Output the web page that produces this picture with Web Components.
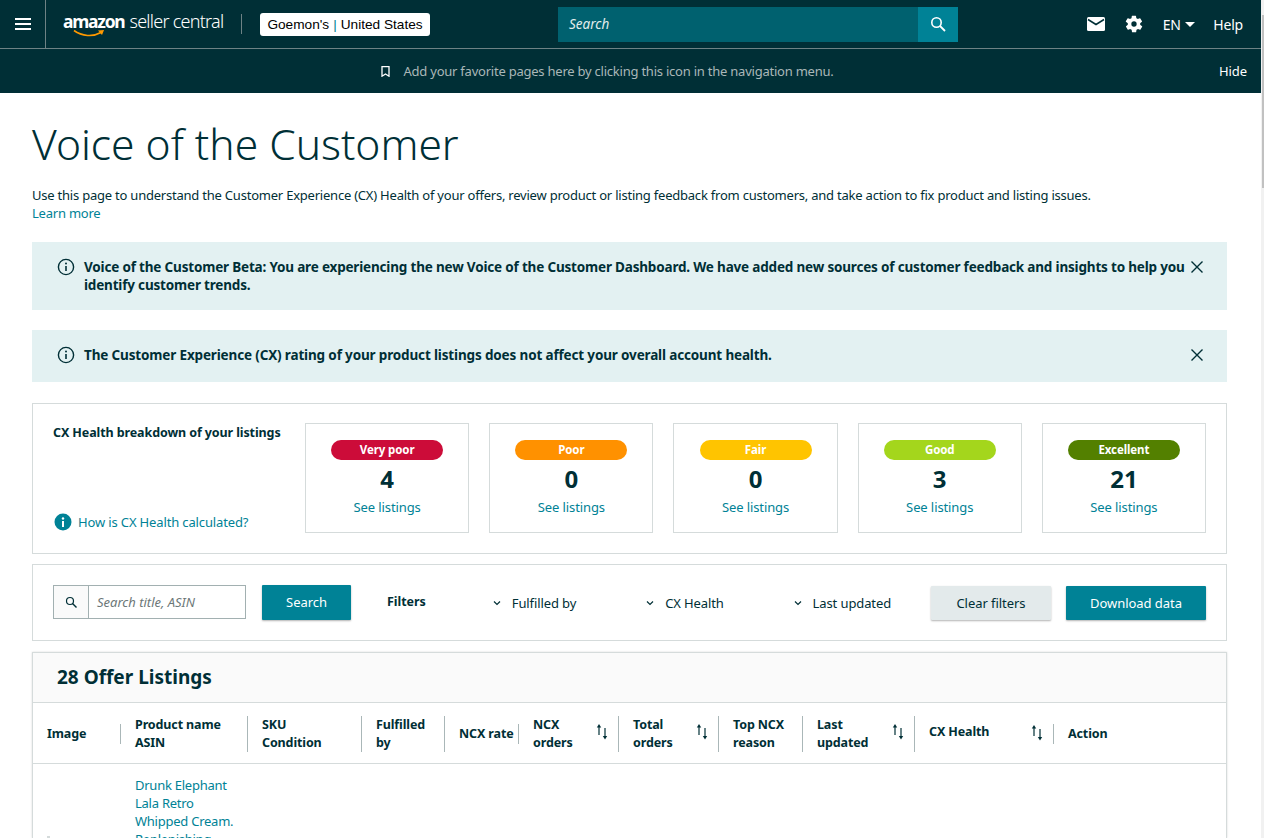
<!DOCTYPE html>
<html><head><meta charset="utf-8"><style>
html,body{margin:0;height:838px;overflow:hidden;background:#fff}
body{font-family:"Noto Sans","Open Sans",sans-serif;color:#002f36;font-size:14px;position:relative}
</style></head><body>
<sc-app></sc-app>
<script>
const FONT='"Noto Sans","Open Sans",sans-serif';
function def(name,html){customElements.define(name,class extends HTMLElement{connectedCallback(){if(this.shadowRoot)return;const r=this.attachShadow({mode:'open'});r.innerHTML=typeof html==='function'?html(this):html;}});}

def('sc-topbar',`<style>
:host{display:flex;align-items:center;height:48px;background:#002f36;border-bottom:1px solid #6e8285;color:#fff;box-sizing:content-box}
.burger{width:45px;height:48px;border-right:1px solid #6e8285;display:flex;align-items:center;justify-content:center;flex:none}
.logo{margin-left:18px;width:159px;position:relative;height:48px;flex:none}
.lt{display:flex;align-items:baseline;margin-top:9px;line-height:24px;white-space:nowrap}
.am{font:700 17.500px "Noto Sans",sans-serif;letter-spacing:-1.250px;margin-left:-1px}
.sc{font:300 18px "Noto Sans",sans-serif;letter-spacing:-.75px;margin-left:5px}
.smile{position:absolute;left:9px;top:29px}
.div{width:1px;height:20px;background:#6e8285;margin:0 18px;flex:none}
.acct{background:#fff;border-radius:3px;color:#000;height:23px;width:170px;box-sizing:border-box;padding:0 7px;display:flex;align-items:center;justify-content:center;font:13.650px "Liberation Sans",sans-serif;white-space:nowrap;flex:none}
.acct i{font-style:normal;color:#008296;margin:0 4px}
.search{margin-left:128px;width:400px;height:35px;background:#00616f;display:flex;flex:none}
.search span{flex:1;font:italic 13.500px ${FONT};padding-left:11px;line-height:35px;color:#e3eded}
.search b{width:40px;background:#008296;display:flex;align-items:center;justify-content:center}
.right{margin-left:auto;display:flex;align-items:center;padding-right:18px;font:14px ${FONT}}
.en{display:flex;align-items:center;margin-left:19px;letter-spacing:-.5px}
.help{margin-left:18px;letter-spacing:-.2px}
</style>
<div class="burger"><svg width="16" height="12" viewBox="0 0 16 12"><path d="M0 1h16M0 6h16M0 11h16" stroke="#fff" stroke-width="2"/></svg></div>
<div class="logo"><div class="lt"><span class="am">amazon</span><span class="sc">seller central</span></div>
<svg class="smile" width="34" height="10" viewBox="0 0 34 10"><path d="M1 1.500C9 7.500 20 8 28 3.500" fill="none" stroke="#f90" stroke-width="1.600"/><path d="M25 1.500l6-.5-2 5z" fill="#f90"/></svg></div>
<div class="div"></div>
<div class="acct">Goemon's<i>|</i>United States</div>
<div class="search"><span>Search</span><b><svg width="16" height="16" viewBox="0 0 16 16"><circle cx="6.500" cy="6.500" r="4.700" fill="none" stroke="#fff" stroke-width="1.600"/><path d="M10 10l5 5" stroke="#fff" stroke-width="1.800"/></svg></b></div>
<div class="right">
<svg width="18" height="14" viewBox="0 0 18 14"><rect width="18" height="14" rx="1.500" fill="#fff"/><path d="M1 2.500l8 5 8-5" fill="none" stroke="#002f36" stroke-width="1.500"/></svg>
<svg style="margin-left:19px" width="20" height="20" viewBox="0 0 24 24"><path fill="#fff" d="M19.400 13a7.500 7.500 0 0 0 0-2l2.100-1.600a.5.5 0 0 0 .1-.6l-2-3.500a.5.5 0 0 0-.6-.2l-2.500 1a7.400 7.400 0 0 0-1.700-1l-.4-2.600a.5.5 0 0 0-.5-.5h-4a.5.5 0 0 0-.5.4l-.4 2.700a7.400 7.400 0 0 0-1.700 1l-2.500-1a.5.5 0 0 0-.6.2l-2 3.500a.5.5 0 0 0 .1.6L4.600 11a7.500 7.500 0 0 0 0 2l-2.100 1.600a.5.5 0 0 0-.1.6l2 3.500c.1.2.4.3.6.2l2.500-1c.5.4 1.100.7 1.700 1l.4 2.600c0 .3.2.5.5.5h4c.3 0 .5-.2.5-.4l.4-2.700c.6-.3 1.200-.6 1.700-1l2.500 1c.2.1.5 0 .6-.2l2-3.500a.5.5 0 0 0-.1-.6zM12 15.200a3.200 3.200 0 1 1 0-6.400 3.200 3.200 0 0 1 0 6.400z"/></svg>
<div class="en">EN<svg style="margin-left:5px" width="10" height="5" viewBox="0 0 10 5"><path d="M0 0h10L5 5z" fill="#fff"/></svg></div>
<div class="help">Help</div></div>`);

def('sc-favbar',`<style>
:host{display:flex;align-items:center;justify-content:center;height:44px;background:#002f36;color:#aab7b8;font:13px ${FONT};letter-spacing:-.23px;position:relative;padding-right:46px}
svg{margin-right:13px}
.hide{position:absolute;right:14px;top:13px;color:#fff;line-height:18px;letter-spacing:-.1px}
</style><svg width="9" height="11" viewBox="0 0 9 11"><path d="M1 .7h7v9.500L4.500 8 1 10.200z" fill="none" stroke="#fff" stroke-width="1.300"/></svg><span>Add your favorite pages here by clicking this icon in the navigation menu.</span><span class="hide">Hide</span>`);

def('sc-banner',`<style>
:host{display:flex;background:#e3f1f2;padding:16px 24px 16px 25px;font:700 13.500px/18px ${FONT};letter-spacing:var(--ls,-.15px);color:#002f36;position:relative;box-sizing:border-box}
.i{flex:none;margin-right:9px}
.t{flex:1;padding-right:5px}
.x{flex:none;margin-top:3px}
</style><svg class="i" width="18" height="18" viewBox="0 0 18 18"><circle cx="9" cy="9" r="7.600" fill="none" stroke="#002f36" stroke-width="1.400"/><path d="M9 8v5" stroke="#002f36" stroke-width="1.600"/><circle cx="9" cy="5.400" r="1" fill="#002f36"/></svg><div class="t"><slot></slot></div><svg class="x" width="12" height="12" viewBox="0 0 12 12"><path d="M.5.5l11 11M11.500.5l-11 11" stroke="#002f36" stroke-width="1.400"/></svg>`);

def('sc-stat',h=>`<style>
:host{display:flex;flex-direction:column;align-items:center;width:164.200px;height:110px;border:1px solid #d5dbdb;padding-top:16px;box-sizing:border-box}
.p{width:112px;height:20px;border-radius:10px;background:${h.getAttribute('c')};color:#fff;font:700 11.500px/20px ${FONT};letter-spacing:-.1px;text-align:center}
.n{font:700 24px/32px ${FONT};color:#002f36;margin-top:3px}
.l{font:13px/18px ${FONT};letter-spacing:-.1px;color:#008296;margin-top:3px}
</style><div class="p">${h.getAttribute('label')}</div><div class="n">${h.getAttribute('n')}</div><div class="l">See listings</div>`);

def('sc-health',`<style>
:host{display:flex;border:1px solid #d5dbdb;height:151px;padding:19px 20px 0;box-sizing:border-box;justify-content:space-between}
.left{width:232px;display:flex;flex-direction:column;height:108px}
h3{margin:0;font:700 12.500px/20px ${FONT};letter-spacing:-.1px;color:#002f36;white-space:nowrap}
.h{margin-top:auto;display:flex;align-items:center;font:13px/18px ${FONT};letter-spacing:-.14px;color:#008296;padding:0 0 0 1px}
.h svg{margin-right:6px}
.r{display:flex;gap:20px}
</style><div class="left"><h3>CX Health breakdown of your listings</h3><div class="h"><svg width="18" height="18" viewBox="0 0 18 18"><circle cx="9" cy="9" r="8.500" fill="#008296"/><rect x="8" y="8" width="2" height="6" fill="#fff"/><circle cx="9" cy="5.500" r="1.200" fill="#fff"/></svg>How is CX Health calculated?</div></div>
<div class="r"><slot></slot></div>`);

def('sc-dd',h=>`<style>
:host{display:flex;align-items:center;font:13px/18px ${FONT};letter-spacing:-.1px;color:#002f36;white-space:nowrap;width:${h.getAttribute('w')}px}
svg{margin-right:11px;flex:none}
</style><svg width="8" height="6" viewBox="0 0 8 6"><path d="M1 1.500l3 3 3-3" fill="none" stroke="#002f36" stroke-width="1.200"/></svg><slot></slot>`);

def('sc-filters',`<style>
:host{display:flex;align-items:center;border:1px solid #d5dbdb;height:77px;padding:0 20px;box-sizing:border-box}
.inp{display:flex;width:193px;height:34px;border:1px solid #a2b0b1;box-sizing:border-box;flex:none;position:relative;top:-1px}
.ic{width:34px;background:#fafafa;border-right:1px solid #a2b0b1;display:flex;align-items:center;justify-content:center}
.ph{font:italic 13px/32px ${FONT};color:#6c7778;padding-left:8px}
.btn{display:flex;align-items:center;justify-content:center;height:34px;border-radius:1px;font:13px ${FONT};letter-spacing:-.05px;box-shadow:0 1px 2px rgba(0,0,0,.3);flex:none;box-sizing:border-box}
.pri{background:#008296;color:#fff}
.sec{background:#e3eaeb;color:#002f36}
.f{font:700 12.500px ${FONT};letter-spacing:-.05px;margin-left:36px;margin-right:67px;color:#002f36;position:relative;top:-1px}
</style>
<div class="inp"><div class="ic"><svg width="12" height="12" viewBox="0 0 12 12"><circle cx="5" cy="5" r="3.500" fill="none" stroke="#002f36" stroke-width="1.200"/><path d="M7.500 7.500l4 4" stroke="#002f36" stroke-width="1.400"/></svg></div><div class="ph">Search title, ASIN</div></div>
<div class="btn pri" style="width:89px;margin-left:16px;height:35px;padding-bottom:2px">Search</div>
<div class="f">Filters</div>
<sc-dd w="154">Fulfilled by</sc-dd><sc-dd w="148">CX Health</sc-dd><sc-dd w="138">Last updated</sc-dd>
<div class="btn sec" style="width:120px">Clear filters</div>
<div class="btn pri" style="width:140px;margin-left:15px">Download data</div>`);

const SORT=`<svg class="s" width="12" height="16" viewBox="0 0 12 16"><path d="M3 11V3" stroke="#002f36" stroke-width="1.200"/><path d="M3 0l2.200 3.500H.8z" fill="#002f36"/><path d="M9 4v9" stroke="#002f36" stroke-width="1.200"/><path d="M9 15.500l2.200-3.500H6.800z" fill="#002f36"/></svg>`;
def('sc-table',()=>{
const cols=[['Image',88,0,1],['Product name<br>ASIN',127],['SKU<br>Condition',114],['Fulfilled<br>by',83],['NCX rate',74,0,1],['NCX<br>orders',100,1],['Total<br>orders',100,1],['Top NCX<br>reason',84],['Last<br>updated',112,1],['CX Health',139,1,1,1],['Action',173,0,1,2]];
const cells=cols.map((c,i)=>`<div class="c ${c[3]?'one':''} ${i==cols.length-1?'last':''}" style="width:${c[1]}px"><span class="t ${c[4]==1?'up':''}">${c[0]}</span>${c[2]?SORT:''}</div>`).join('');
return `<style>
:host{display:block;border:1px solid #d5dbdb;border-bottom:0;box-shadow:0 0 2px rgba(0,0,0,.15);height:186px;overflow:hidden;box-sizing:border-box;position:relative}
.head{height:50px;background:#fafafa;border-bottom:1px solid #d5dbdb;box-sizing:border-box;padding-left:24px;font:700 19px/48px ${FONT};color:#002f36}
.thead{display:flex;height:61px;border-bottom:1px solid #d5dbdb;align-items:center;box-sizing:border-box;padding-top:1px}
.c{box-sizing:border-box;padding-left:14px;height:36px;font:700 12.500px/18px ${FONT};letter-spacing:-.12px;color:#002f36;position:relative;display:flex;align-items:center;border-right:1px solid #aab7b8;white-space:nowrap;flex:none}
.c.one{height:20px}
.c.last{border:0}
.s{position:absolute;right:10px;top:8px}
.one .s{top:1px}
.up{position:relative;top:-2px}
.row{padding:12px 0 0 102px;width:110px;font:13px/18px ${FONT};letter-spacing:-.25px;color:#008296}
.speck{position:absolute;left:14px;top:183px;width:3px;height:2px;background:#d5dbdb}
</style><div class="head">28 Offer Listings</div><div class="thead">${cells}</div>
<div class="row">Drunk Elephant Lala Retro Whipped Cream. Replenishing</div><div class="speck"></div>`});

def('sc-app',`<style>
:host{display:block;width:1261px}
main{display:block;padding:0 34px 0 32px}
h1{font:300 42.500px/52px ${FONT};margin:0;padding-top:25px;color:#002f36}
p{margin:16px 0 0;font:13px/18px ${FONT};letter-spacing:-.22px;color:#002f36}
a{color:#008296}
sc-banner{margin-top:20px}
.b1{margin-top:20px;height:68px;--ls:-.18px}.b2{height:52px}
sc-health{margin-top:21px}
sc-filters{margin-top:10px}
sc-table{margin-top:11px}
.track{position:absolute;left:1261px;top:0;width:3px;height:838px;background:#f1f1f1}
.thumb{height:173px;margin:15px 0 0 1px;background:#c1c1c1}
</style>
<sc-topbar></sc-topbar><sc-favbar></sc-favbar>
<main><h1>Voice of the Customer</h1>
<p>Use this page to understand the Customer Experience (CX) Health of your offers, review product or listing feedback from customers, and take action to fix product and listing issues.<br><a>Learn more</a></p>
<sc-banner class="b1">Voice of the Customer Beta: You are experiencing the new Voice of the Customer Dashboard. We have added new sources of customer feedback and insights to help you identify customer trends.</sc-banner>
<sc-banner class="b2">The Customer Experience (CX) rating of your product listings does not affect your overall account health.</sc-banner>
<sc-health><sc-stat c="#cc0c39" label="Very poor" n="4"></sc-stat><sc-stat c="#ff9100" label="Poor" n="0"></sc-stat><sc-stat c="#ffc400" label="Fair" n="0"></sc-stat><sc-stat c="#a4d61c" label="Good" n="3"></sc-stat><sc-stat c="#538000" label="Excellent" n="21"></sc-stat></sc-health>
<sc-filters></sc-filters>
<sc-table></sc-table></main>
<div class="track"><div class="thumb"></div></div>`);
</script></body></html>
